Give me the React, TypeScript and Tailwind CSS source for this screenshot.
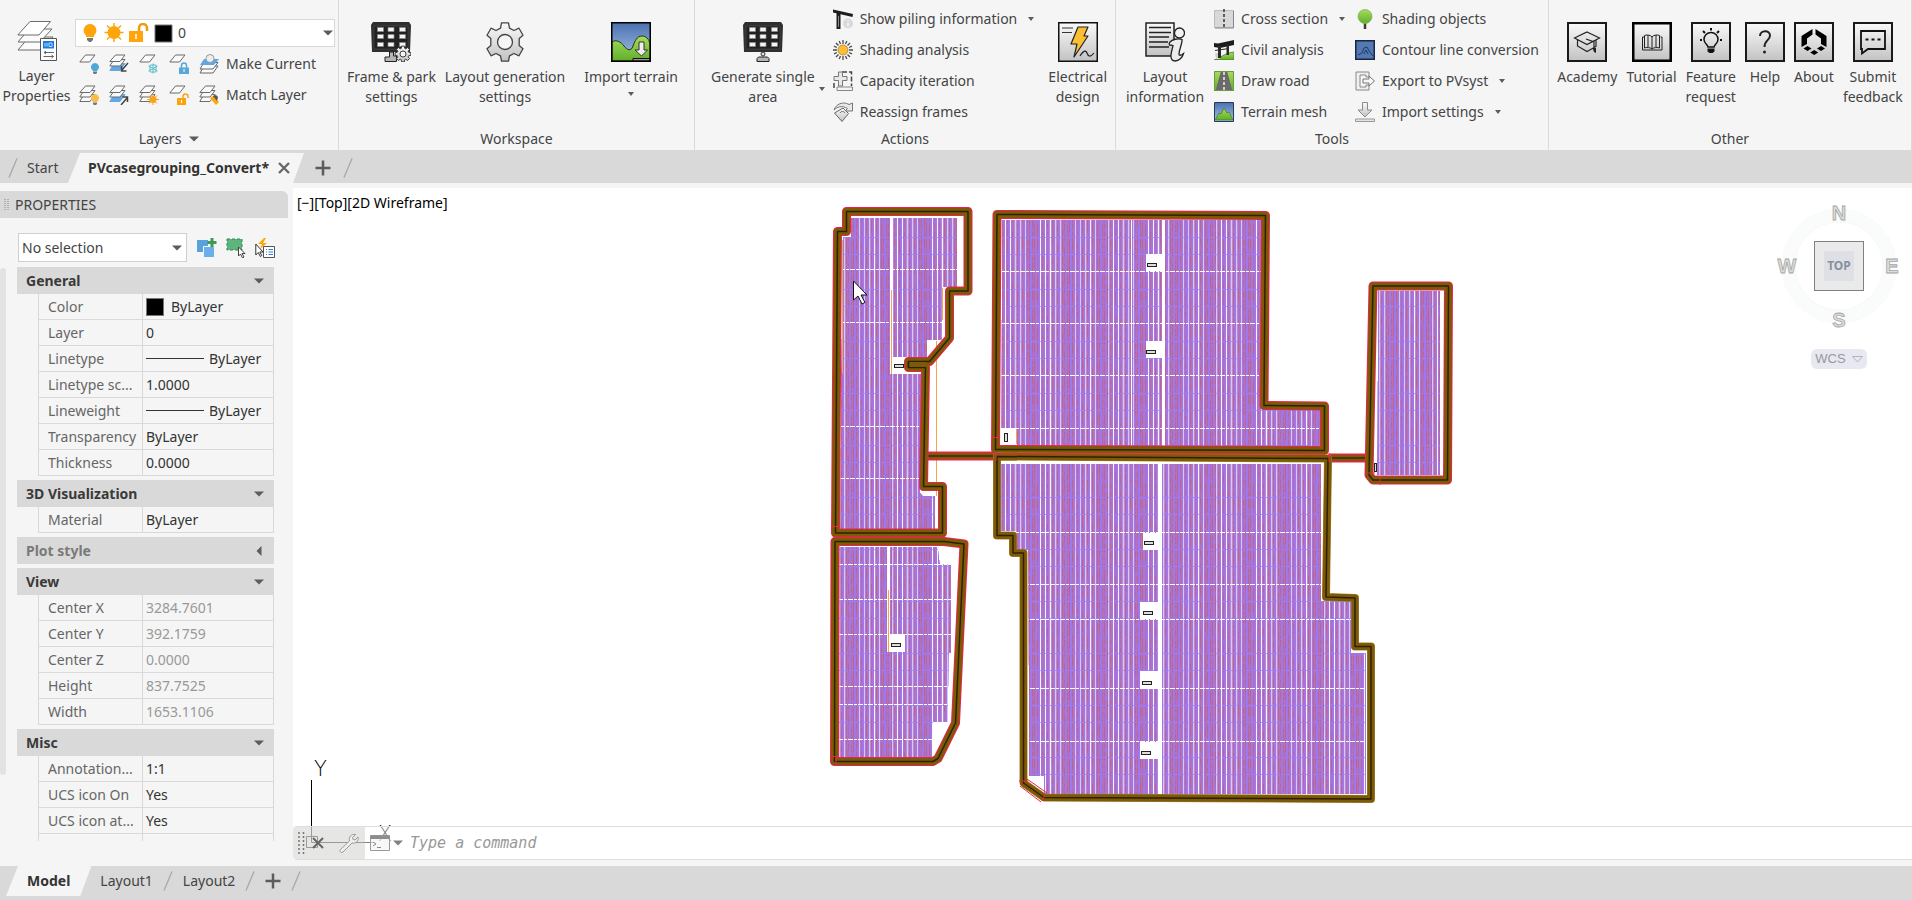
import type { ReactNode } from "react";
import clsx from "clsx";

type IconProps = { size?: number; children: ReactNode; className?: string };

function Svg({ size = 20, children, className }: IconProps) {
  return (
    <svg width={size} height={size} viewBox={`0 0 ${size} ${size}`} fill="none" aria-hidden="true" className={clsx("shrink-0", className)}>
      {children}
    </svg>
  );
}

function Caret({ className }: { className?: string }) {
  return (
    <svg width="10" height="6" viewBox="0 0 10 6" aria-hidden="true" className={clsx("shrink-0", className)}>
      <path d="M0 0.5h10L5 5.5z" fill="#5c5c5c" />
    </svg>
  );
}

function SmallCaret({ className }: { className?: string }) {
  return (
    <svg width="6" height="4" viewBox="0 0 6 4" aria-hidden="true" className={clsx("shrink-0", className)}>
      <path d="M0 0h6L3 4z" fill="#5c5c5c" />
    </svg>
  );
}

function SharedDefs() {
  return (
    <svg className="absolute h-0 w-0" aria-hidden="true">
      <defs>
        <linearGradient id="metal" x1="0" y1="0" x2="0" y2="1">
          <stop offset="0" stopColor="#fafafa" />
          <stop offset="1" stopColor="#c2c2c2" />
        </linearGradient>
        <linearGradient id="sky" x1="0" y1="0" x2="0" y2="1">
          <stop offset="0" stopColor="#4a72b0" />
          <stop offset="1" stopColor="#a9c3e8" />
        </linearGradient>
        <linearGradient id="grass" x1="0" y1="0" x2="0" y2="1">
          <stop offset="0" stopColor="#a8dc5c" />
          <stop offset="1" stopColor="#5fae2c" />
        </linearGradient>
      </defs>
    </svg>
  );
}

/* ---------- layer icons ---------- */

function Bulb({ x, y, color }: { x: number; y: number; color: string }) {
  return (
    <g transform={`translate(${x} ${y})`}>
      <path d="M4 0a4 4 0 0 0-2.4 7.2V8h4.8v-.8A4 4 0 0 0 4 0z" fill={color} />
      <path d="M2 8.6h4v1.4l-1 1H3l-1-1z" fill="#777" />
    </g>
  );
}

function Sheet() {
  return <path d="M6.5 1h9.5l-5.5 7H.8z" fill="#fafafa" stroke="#6b6b6b" />;
}

function Stack({ blue }: { blue?: boolean }) {
  return (
    <>
      <path d="M5 9.5h11l-5 7H.8z" fill={blue ? "#62a8e5" : "#fafafa"} stroke={blue ? "#62a8e5" : "#6b6b6b"} />
      <path d="M5 5.5h11l-5 6.5H.8z" fill="#fafafa" stroke="#6b6b6b" />
      <path d="M6.5 1h9.5l-5 6.5H.8z" fill="#fafafa" stroke="#6b6b6b" />
    </>
  );
}

const layerTools: { label: string; icon: ReactNode }[][] = [
  [
    { label: "Off", icon: <><Sheet /><Bulb x={12} y={9} color="#4fa9d8" /></> },
    { label: "Isolate", icon: <><Stack blue /><path d="M19 9l-6 7M12.5 12v5h5" stroke="#444" strokeWidth="1.5" /></> },
    {
      label: "Freeze",
      icon: <><Sheet /><path d="M14 9.5v10M9.5 12l9 5M9.5 17l9-5M11 11h6v7h-6z" stroke="#58bccb" /></>,
    },
    {
      label: "Lock",
      icon: <><Sheet /><path d="M12.5 14v-2.5a2.5 2.5 0 0 1 5 0V14" stroke="#56a8dc" strokeWidth="1.5" /><path d="M10 13.5h10V20H10z" fill="#56a8dc" /><path d="M15 15v3" stroke="#fff" /></>,
    },
  ],
  [
    { label: "Turn all on", icon: <><Stack /><Bulb x={12} y={9} color="#f9bd4a" /></> },
    { label: "Unisolate", icon: <><Stack blue /><path d="M12 20l6-7M13.5 12h5v5" stroke="#444" strokeWidth="1.5" /></> },
    {
      label: "Thaw",
      icon: <><Stack /><path d="M14 8.5v12M8 14.5h12M10 10.5l8 8M18 10.5l-8 8" stroke="#f8a41b" /><circle cx="14" cy="14.5" r="3.5" fill="#f8a41b" /></>,
    },
    {
      label: "Unlock",
      icon: <><Sheet /><path d="M14 14v-2.5a2.5 2.5 0 0 1 5 0V13" stroke="#f8a41b" strokeWidth="1.5" /><path d="M8 13h9v7H8z" fill="#fba30c" /><path d="M12.5 15v3" stroke="#fff" /></>,
    },
  ],
];

function LayerPropertiesIcon() {
  return (
    <Svg size={40}>
      <path d="M12 16h24L24 29H1z" fill="#fbfbfb" stroke="#6b6b6b" />
      <path d="M12 8h23L23 21H1z" fill="#fbfbfb" stroke="#6b6b6b" />
      <path d="M13 .5h20.5L22 14H.8z" fill="#fff" stroke="#6b6b6b" />
      <path d="M23.5 17.5h16v22h-16z" fill="#fff" stroke="#555" />
      <path d="M26 20h11v7.5H26z" fill="#1a7be5" />
      <path d="M28 22v3.5M30 22v3.5M32 22v3.5h3V22h-3" stroke="#bcd9f8" />
      <path d="M27 31.5h10M29 30l-2 1.5 2 1.5M26.5 35.5h10M34.5 34l2 1.5-2 1.5" stroke="#666" />
    </Svg>
  );
}

/* ---------- large ribbon icons ---------- */

function Panel() {
  return (
    <>
      <path d="M2 0h36l2 3-1 27H1L0 3z" fill="#2f2f2f" />
      <path d="M3 4h34v23H3z" fill="#222" stroke="#555" strokeWidth=".5" />
      {[5.5, 12.5, 20.5].map((row) =>
        [6.5, 17, 28.5].map((col) => (
          <path key={`${row}-${col}`} d={`M${col} ${row}h6v4h-6z`} fill="#f4f4f4" stroke="#888" strokeWidth=".7" />
        ))
      )}
    </>
  );
}

function Cog({ cx, cy, r }: { cx: number; cy: number; r: number }) {
  const pts: string[] = [];
  for (let i = 0; i < 8; i++) {
    [[-0.3, 0.74], [-0.17, 1], [0.17, 1], [0.3, 0.74]].forEach(([d, k]) => {
      const a = (i * Math.PI) / 4 + d;
      pts.push(`${(cx + Math.sin(a) * r * k).toFixed(1)},${(cy - Math.cos(a) * r * k).toFixed(1)}`);
    });
  }
  return (
    <>
      <polygon points={pts.join(" ")} fill="url(#metal)" stroke="#3b3b3b" strokeLinejoin="round" />
      <circle cx={cx} cy={cy} r={r * 0.38} fill="#f5f5f5" stroke="#3b3b3b" />
    </>
  );
}

const frameIcon = (
  <Svg size={40}>
    <Panel />
    <path d="M18.5 30h4v4h3v5.5H14V35h4.5z" fill="#b5b5b5" stroke="#222" />
    <Cog cx={32} cy={32} r={8} />
  </Svg>
);

const panelIcon = (
  <Svg size={40}>
    <Panel />
    <circle cx="20" cy="32" r="2" fill="#ddd" stroke="#333" />
    <path d="M14 36.5l1.5-1.5h9l1.5 1.5v3H14z" fill="#b5b5b5" stroke="#222" />
  </Svg>
);

const gearIcon = (
  <Svg size={40}>
    <path
      d="M16.5.8h7l1 5.4 4.5 2.3 5-2.3 4 7-3.8 3.3v7l3.8 3.3-4 7-5-2.3-4.5 2.3-1 5.4h-7l-1-5.4-4.5-2.3-5 2.3-4-7 3.8-3.3v-7L2 13.2l4-7 5 2.3 4.5-2.3z"
      fill="url(#metal)"
      stroke="#444"
      strokeWidth="1.3"
      strokeLinejoin="round"
    />
    <circle cx="20" cy="20" r="7.5" fill="#f5f5f5" stroke="#444" strokeWidth="1.3" />
  </Svg>
);

const terrainIcon = (
  <Svg size={40}>
    <path d="M.75.75h38.5v38.5H.75z" fill="url(#sky)" />
    <path d="M1 20c4-3 9 0 12 4 3 4 7 6 9 0 2-5 4-10 9-10 4 0 7 3 8 8v17H1z" fill="url(#grass)" stroke="#22310f" />
    <path d="M28 20h5v8h3.5L30.5 34 24 28h4z" fill="#eee" stroke="#333" />
    <path d="M22 36.5h17V39H22z" fill="#999" stroke="#111" />
    <path d="M.75.75h38.5v38.5H.75z" stroke="#000" strokeWidth="1.5" />
  </Svg>
);

const electricalIcon = (
  <Svg size={40}>
    <path d="M.75.75h38.5v38.5H.75z" fill="url(#metal)" stroke="#111" strokeWidth="1.5" />
    <path d="M4 6h11M4 10.5h10" stroke="#333" strokeWidth="1.2" />
    <path d="M20 5h10l-4 9h4L16 35l3-13h-6z" fill="#fbbf33" stroke="#222" strokeWidth="1.2" strokeLinejoin="round" />
    <path d="M22 34c4-6 6-6 7-3s3 5 7 0" stroke="#222" strokeWidth="1.2" />
  </Svg>
);

const infoIcon = (
  <Svg size={40}>
    <path d="M1 1h28v33H1z" fill="url(#metal)" stroke="#222" strokeWidth="1.5" />
    <path d="M4 5.5h22M4 10.5h22M4 15h20M4 20h19M4 25h20" stroke="#222" strokeWidth="1.3" />
    <circle cx="34.5" cy="11" r="5" fill="#f2f2f2" stroke="#222" strokeWidth="1.3" />
    <path
      d="M25 20c2-2.5 8-4 12-2.5.5 4-3 10-3 14.5 0 2 2 1.500 4.500-.5-1 4-4.500 7.500-8.500 7.500-7-.5-3-10-2-15.500-1.500-.5-2.500-.5-3.500-.5-.5-1-.5-2 .5-3z"
      fill="#ececec"
      stroke="#222"
      strokeWidth="1.3"
    />
  </Svg>
);

function Framed({ children }: { children: ReactNode }) {
  return (
    <Svg size={40}>
      <path d="M1 1h38v38H1z" fill="url(#metal)" stroke="#1a1a1a" strokeWidth="2" />
      {children}
    </Svg>
  );
}

const academyIcon = (
  <Framed>
    <path d="M20 10l12.5 6L20 22.5 7.5 16zM10.5 18v6L20 29.5l9-5v-6M19 17l8 3v7" stroke="#222" strokeWidth="1.2" />
    <path d="M25.5 26h3.5v5l-2-1z" fill="#222" />
  </Framed>
);
const tutorialIcon = (
  <Framed>
    <path d="M1 1h38v38H1z" stroke="#000" strokeWidth="3" />
    <path d="M20 15c-1-2-6-2.5-7.5-1.5V26c2-1 6-.5 7.5 1 1.5-1.5 5.5-2 7.5-1V13.5C26 12.5 21 13 20 15zM20 15v12M16 13v12M24 13v12M12 15h-1.5v13H30V15h-1.5" stroke="#222" />
  </Framed>
);
const featureIcon = (
  <Framed>
    <path d="M17 25c0-2-4-3.5-4-7.5a7 7 0 0 1 14 0c0 4-4 5.5-4 7.5z" stroke="#111" strokeWidth="1.5" />
    <path d="M16.5 26.5h7v3l-2 1.5h-3l-2-1.5z" fill="#111" />
    <path d="M20 6v2.5M12 9l2 2M28 9l-2 2M9 18h2M29 18h2" stroke="#111" strokeWidth="2" />
  </Framed>
);
const helpIcon = (
  <Framed>
    <path d="M15 14c0-6 10-6.5 10-.5 0 5-5.5 4.5-5.5 11.5" stroke="#222" strokeWidth="2" />
    <circle cx="19.5" cy="30" r="1.5" fill="#222" />
  </Framed>
);
const aboutIcon = (
  <Framed>
    <path d="M18.5 7v5.5L13 16.5V22l-5.500 3V14zM21.5 7v5.5l5.500 4V22l5.500 3V14z" fill="#000" />
    <path d="M13.5 24l4 2.5-4 2.5-4-2.5zM27 24l4 2.5-4 2.5-4-2.5zM20.2 28l4 2.5-4 2.5-4-2.5z" fill="#000" />
  </Framed>
);
const feedbackIcon = (
  <Framed>
    <path d="M8 9h24v18H15l-6 4.5V27H8z" stroke="#111" strokeWidth="1.8" />
    <path d="M12.5 16.5h3v2h-3zM18.5 16.5h3v2h-3zM24.5 16.5h3v2h-3z" fill="#111" />
  </Framed>
);

/* ---------- small ribbon icons ---------- */

const pilingIcon = (
  <Svg>
    <path d="M0 .5l20 4.5-.5 3L0 3.5z" fill="#1d1d1d" />
    <path d="M3.5 4h4v16h-4z" fill="#1d1d1d" />
    <path d="M5.5 7v11" stroke="#888" />
    <circle cx="15" cy="14.5" r="5" fill="#d9d9d9" />
    <path d="M15 11v1M15 13.5v4" stroke="#f6f6f6" strokeWidth="1.5" />
  </Svg>
);
const shadingIcon = (
  <Svg>
    <path
      d="M10 0v4M10 16v4M0 10h4M16 10h4M3 3l2.5 2.5M14.5 14.5L17 17M17 3l-2.5 2.5M5.5 14.5L3 17M6.2.9l1.3 3M12.5 16l1.3 3M13.8.9l-1.3 3M7.5 16l-1.3 3M.9 6.2l3 1.3M16 12.5l3 1.3M19 6.2l-3 1.3M4 12.5l-3 1.3"
      stroke="#4a4a4a"
      strokeWidth="1.3"
    />
    <circle cx="10" cy="10" r="5" fill="#fbbd3a" stroke="#a67a1d" strokeWidth=".7" />
  </Svg>
);
const capacityIcon = (
  <Svg>
    <path d="M9 1h9.5v14M1 12v7" stroke="#444" strokeWidth="1.5" strokeDasharray="5 2" />
    <path d="M5.5 1h4v4.5H14v4H9.5V15h-4V9.5H1v-4h4.5z" fill="#e8e8e8" stroke="#777" />
    <path d="M4 16h15.5v3.5H4z" fill="#f4f4f4" stroke="#888" />
  </Svg>
);
const reassignIcon = (
  <Svg>
    <path d="M1 8C3 2 10-1 16 2.5L19.5 1v8H12l2.5-2.5C9 3 4 5 1 8z" fill="#e8e8e8" stroke="#777" />
    <path d="M10 6l5.5 5.5L9 19.5 1.5 11z" fill="url(#metal)" stroke="#666" />
    <path d="M7 11c1-2 4-2 5 0" stroke="#666" />
  </Svg>
);
const crossIcon = (
  <Svg>
    <path d="M.5 1.5h19v17H.5z" fill="#d8d8d8" stroke="#bbb" />
    <path d="M1 19h18.5V2" stroke="#888" />
    <path d="M10 0v20" stroke="#333" strokeWidth="1.5" strokeDasharray="3 2" />
  </Svg>
);
const civilIcon = (
  <Svg>
    <path d="M0 20c6-1 9-7 20-8v8z" fill="url(#grass)" stroke="#41701f" strokeWidth=".7" />
    <path d="M1 13h5v6H2z" fill="#cfcfcf" />
    <path d="M0 3l4 .5L20 0v5L6 8 0 7z" fill="#1d1d1d" />
    <path d="M4 6h3v12H4zM12.5 5H15v10h-2.5z" fill="#2a2a2a" />
    <path d="M1 10.5l14-2" stroke="#2a2a2a" />
  </Svg>
);
const roadIcon = (
  <Svg>
    <path d="M0 0h20v20H0z" fill="url(#grass)" />
    <path d="M7 0h6l5.5 20h-17z" fill="#6a6a6a" />
    <path d="M10 1v18" stroke="#f2f2f2" strokeWidth="1.5" strokeDasharray="3 2" />
    <path d="M.5.5h19v19H.5z" stroke="#6b9a3f" />
  </Svg>
);
const meshIcon = (
  <Svg>
    <path d="M.5.5h19v19H.5z" fill="url(#sky)" stroke="#263a5c" />
    <path d="M1 18l4-7 2 1 3-6 3 5 2-1 4 8z" fill="url(#grass)" stroke="#447622" strokeWidth=".7" />
  </Svg>
);
const treeIcon = (
  <Svg>
    <path d="M10 12v8" stroke="#4a3a2a" strokeWidth="2.5" />
    <circle cx="10" cy="7.5" r="7" fill="url(#grass)" stroke="#86b35c" strokeWidth=".8" />
  </Svg>
);
const contourIcon = (
  <Svg>
    <path d="M.75.75h18.5v18.5H.75z" fill="#5379b4" stroke="#1b2740" strokeWidth="1.5" />
    <path d="M3 15l4-2 2-5 3-1 2 4 4 5M9 14l2-4 2 4" stroke="#213a66" />
  </Svg>
);
const exportIcon = (
  <Svg>
    <path d="M1 1h13v5h-3V4H5v12h6v-2h3v5H1z" fill="#f0f0f0" stroke="#888" />
    <path d="M8 8h6V5l5.5 5-5.5 5v-3H8z" fill="#f6f6f6" stroke="#777" />
  </Svg>
);
const importIcon = (
  <Svg>
    <path d="M7.5.5h5V8H17l-7 7-7-7h4.5z" fill="url(#metal)" stroke="#8a8a8a" />
    <path d="M.5 17h19v2.5H.5z" fill="#e4e4e4" stroke="#999" />
  </Svg>
);

/* ---------- ribbon ---------- */

function BigButton({ icon, lines, caret, className }: { icon: ReactNode; lines: string[]; caret?: boolean; className?: string }) {
  return (
    <button className={clsx("flex flex-col items-center text-center text-sm leading-5 text-[#444]", className)}>
      <span className="mb-[5px]">{icon}</span>
      {lines.map((l) => (
        <span key={l} className="whitespace-nowrap">
          {l}
        </span>
      ))}
      {caret && <SmallCaret className="mt-[5px]" />}
    </button>
  );
}

function SmallButton({ icon, label, caret }: { icon: ReactNode; label: string; caret?: boolean }) {
  return (
    <button className="flex h-[31px] items-center gap-[7px] whitespace-nowrap text-sm text-[#444]">
      {icon}
      {label}
      {caret && <SmallCaret className="ml-1" />}
    </button>
  );
}

function Group({ title, caret, children, className }: { title: string; caret?: boolean; children: ReactNode; className?: string }) {
  return (
    <section className="flex min-w-0 flex-col border-r border-[#d9d9d9]" aria-label={title}>
      <div className={clsx("flex h-32 items-start", className)}>{children}</div>
      <div className="flex h-[22px] items-center justify-center gap-2 text-sm text-[#444]">
        {title}
        {caret && <Caret />}
      </div>
    </section>
  );
}

function Ribbon() {
  return (
    <header className="grid grid-cols-[339fr_356fr_421fr_433fr_363fr] bg-[#f5f5f5]">
      <Group title="Layers" caret className="pt-[19px]">
        <BigButton icon={<LayerPropertiesIcon />} lines={["Layer", "Properties"]} className="w-[73px] shrink-0 pt-[2px]" />
        <div className="min-w-0 flex-1 pl-[2px] pr-[3px]">
          <div className="relative mb-px flex h-7 items-center border border-[#d9d9d9] bg-white pl-[7px]">
            <svg width="92" height="20" viewBox="0 0 92 20" aria-hidden="true" fill="none">
              <path d="M7 1a6.5 6.5 0 0 0-4 11.5V14h8v-1.5A6.5 6.5 0 0 0 7 1z" fill="#fda50a" />
              <path d="M4 15h6v2l-2 2H6l-2-2z" fill="#777" />
              <path d="M31 0v19M21.5 9.5h19M24 2.5l14 14M38 2.5l-14 14" stroke="#fda50a" strokeWidth="1.5" />
              <circle cx="31" cy="9.5" r="6.5" fill="#fda50a" />
              <path d="M56 8V5a4 4 0 0 1 8 0v3" stroke="#f29a0c" strokeWidth="2.5" />
              <path d="M46 8h14v11H46z" fill="#fda50a" />
              <path d="M53 11v5" stroke="#fff" strokeWidth="1.5" />
              <path d="M72 2h17v17H72z" fill="#000" stroke="#777" />
            </svg>
            <select aria-label="Current layer" className="h-full flex-1 appearance-none bg-transparent pl-[3px] text-sm text-[#444]" defaultValue="0">
              <option value="0">0</option>
            </select>
            <Caret className="pointer-events-none absolute right-px" />
          </div>
          {layerTools.map((row, i) => (
            <div key={i} className="flex h-[31px] items-center gap-[10px] pl-1">
              {row.map((t) => (
                <button key={t.label} aria-label={t.label} title={t.label}>
                  <Svg>{t.icon}</Svg>
                </button>
              ))}
              <SmallButton
                icon={
                  <Svg>
                    {i === 0 ? (
                      <>
                        <path d="M5 12h14l-5 7H1z" fill="#fafafa" stroke="#666" />
                        <path d="M5 8.5h14L14 15H1z" fill="#fafafa" stroke="#666" />
                        <path d="M5 5h15l-5 6H1z" fill="#5ba7e8" />
                        <circle cx="11" cy="4.5" r="4" fill="#eee" stroke="#999" />
                      </>
                    ) : (
                      <>
                        <Stack />
                        <path d="M11 13l3-2 6 6-3 3z" fill="#fda50a" />
                        <path d="M14 11l3-1 2 2-1 4z" fill="#555" />
                      </>
                    )}
                  </Svg>
                }
                label={i === 0 ? "Make Current" : "Match Layer"}
              />
            </div>
          ))}
        </div>
      </Group>

      <Group title="Workspace" className="gap-[9px] pl-2 pt-[22px]">
        <BigButton icon={frameIcon} lines={["Frame & park", "settings"]} />
        <BigButton icon={gearIcon} lines={["Layout generation", "settings"]} />
        <BigButton icon={terrainIcon} lines={["Import terrain"]} caret className="ml-[10px]" />
      </Group>

      <Group title="Actions" className="pl-4">
        <BigButton icon={panelIcon} lines={["Generate single", "area"]} className="pt-[22px]" />
        <SmallCaret className="ml-1 mt-[87px]" />
        <div className="ml-2 flex flex-col pt-[3px]">
          <SmallButton icon={pilingIcon} label="Show piling information" caret />
          <SmallButton icon={shadingIcon} label="Shading analysis" />
          <SmallButton icon={capacityIcon} label="Capacity iteration" />
          <SmallButton icon={reassignIcon} label="Reassign frames" />
        </div>
        <BigButton icon={electricalIcon} lines={["Electrical", "design"]} className="ml-auto mr-2 pt-[22px]" />
      </Group>

      <Group title="Tools" className="pl-[10px]">
        <BigButton icon={infoIcon} lines={["Layout", "information"]} className="pt-[22px]" />
        <div className="ml-[10px] flex flex-col pt-[3px]">
          <SmallButton icon={crossIcon} label="Cross section" caret />
          <SmallButton icon={civilIcon} label="Civil analysis" />
          <SmallButton icon={roadIcon} label="Draw road" />
          <SmallButton icon={meshIcon} label="Terrain mesh" />
        </div>
        <div className="ml-auto mr-[9px] flex flex-col pt-[3px]">
          <SmallButton icon={treeIcon} label="Shading objects" />
          <SmallButton icon={contourIcon} label="Contour line conversion" />
          <SmallButton icon={exportIcon} label="Export to PVsyst" caret />
          <SmallButton icon={importIcon} label="Import settings" caret />
        </div>
      </Group>

      <Group title="Other" className="justify-center gap-[9px] pt-[22px]">
        <BigButton icon={academyIcon} lines={["Academy"]} />
        <BigButton icon={tutorialIcon} lines={["Tutorial"]} />
        <BigButton icon={featureIcon} lines={["Feature", "request"]} />
        <BigButton icon={helpIcon} lines={["Help"]} />
        <BigButton icon={aboutIcon} lines={["About"]} />
        <BigButton icon={feedbackIcon} lines={["Submit", "feedback"]} />
      </Group>
    </header>
  );
}

/* ---------- tabs ---------- */

function Slash() {
  return (
    <svg width="10" height="20" viewBox="0 0 10 20" aria-hidden="true" className="shrink-0">
      <path d="M1 19.5L9 .5" stroke="#a8a8a8" strokeWidth="1.3" />
    </svg>
  );
}

function Plus() {
  return (
    <Svg size={16}>
      <path d="M8 .5v15M.5 8h15" stroke="#5c5c5c" strokeWidth="2.5" />
    </Svg>
  );
}

function DocumentTabs() {
  return (
    <nav className="flex h-[33px] items-center bg-[#d9d9d9] pl-2 pt-[3px] text-sm text-[#444]" aria-label="Drawings">
      <Slash />
      <button className="w-[50px] pl-[9px] text-left">Start</button>
      <div className="flex h-full items-center bg-[#f5f5f5] pl-5 pr-[14px] [clip-path:polygon(12px_0,100%_0,calc(100%-11px)_100%,0_100%)]">
        <button className="font-bold text-[#333]">PVcasegrouping_Convert*</button>
        <button aria-label="Close drawing" className="ml-[9px]">
          <Svg size={12}>
            <path d="M1 1l10 10M11 1L1 11" stroke="#666" strokeWidth="2.3" />
          </Svg>
        </button>
      </div>
      <button aria-label="New drawing" className="ml-[11px] mr-3">
        <Plus />
      </button>
      <Slash />
    </nav>
  );
}

function LayoutTabs() {
  return (
    <nav className="flex h-[34px] shrink-0 items-center bg-[#d9d9d9] pb-1 pl-[6px] text-sm text-[#444]" aria-label="Layouts">
      <button className="h-full bg-[#f5f5f5] px-[21px] font-bold text-[#333] [clip-path:polygon(12px_0,100%_0,calc(100%-11px)_100%,0_100%)]">
        Model
      </button>
      <div className="flex items-center gap-[10px] pl-[9px]">
        <button>Layout1</button>
        <Slash />
        <button>Layout2</button>
        <Slash />
        <button aria-label="New layout">
          <Plus />
        </button>
        <Slash />
      </div>
    </nav>
  );
}

/* ---------- properties palette ---------- */

interface Section {
  title: string;
  rows: [string, string, ("swatch" | "line")?][];
  closed?: boolean;
  readOnly?: boolean;
}

const sections: Section[] = [
  {
    title: "General",
    rows: [
      ["Color", "ByLayer", "swatch"],
      ["Layer", "0"],
      ["Linetype", "ByLayer", "line"],
      ["Linetype sc...", "1.0000"],
      ["Lineweight", "ByLayer", "line"],
      ["Transparency", "ByLayer"],
      ["Thickness", "0.0000"],
    ],
  },
  { title: "3D Visualization", rows: [["Material", "ByLayer"]] },
  { title: "Plot style", rows: [], closed: true },
  {
    title: "View",
    readOnly: true,
    rows: [
      ["Center X", "3284.7601"],
      ["Center Y", "392.1759"],
      ["Center Z", "0.0000"],
      ["Height", "837.7525"],
      ["Width", "1653.1106"],
    ],
  },
  {
    title: "Misc",
    rows: [
      ["Annotation...", "1:1"],
      ["UCS icon On", "Yes"],
      ["UCS icon at...", "Yes"],
      ["", ""],
    ],
  },
];

function PropertySection({ title, rows, closed, readOnly }: Section) {
  return (
    <section className="mb-1">
      <button
        className={clsx("flex h-[27px] w-full items-center justify-between bg-[#d9d9d9] pl-[9px] pr-[10px] text-sm font-bold", closed ? "text-[#7a7a7a]" : "text-[#3a3a3a]")}
        aria-expanded={!closed}
      >
        {title}
        <Caret className={closed ? "rotate-90" : ""} />
      </button>
      {rows.length > 0 && (
        <div className="pl-[21px]">
          <table className="w-full table-fixed border-separate border-spacing-0 border-l border-[#d9d9d9] text-sm">
            <tbody>
              {rows.map(([name, value, kind]) => (
                <tr key={name} className="h-[26px]">
                  <th scope="row" className="w-[104px] whitespace-nowrap border-b border-r border-[#d9d9d9] py-0 pl-[9px] text-left font-normal leading-5 text-[#666]">
                    {name}
                  </th>
                  <td className={clsx("border-b border-r border-[#d9d9d9] py-0 pl-[3px] leading-5", readOnly ? "text-[#999]" : "text-[#333]")}>
                    <span className="flex items-center">
                      {kind === "swatch" && <span className="mr-[7px] h-[18px] w-[18px] border border-[#777] bg-black" />}
                      {kind === "line" && <span className="mr-[5px] h-px w-[58px] bg-[#333]" />}
                      {value}
                    </span>
                  </td>
                </tr>
              ))}
            </tbody>
          </table>
        </div>
      )}
    </section>
  );
}

function PropertiesPalette() {
  return (
    <aside className="flex w-[293px] shrink-0 flex-col bg-[#f5f5f5] pt-2">
      <h2 className="mr-[5px] flex h-[27px] items-center rounded-tr-md bg-[#d9d9d9] pl-1 text-sm text-[#444]">
        <svg width="5" height="12" viewBox="0 0 5 12" aria-hidden="true" className="mr-[6px]">
          <path d="M1 0v12M4 0v12" stroke="#888" strokeDasharray="1 1" />
        </svg>
        PROPERTIES
      </h2>
      <div className="mt-[15px] flex items-center pl-[18px]">
        <div className="relative flex h-[29px] w-[169px] items-center border border-[#d0d0d0] bg-white">
          <select aria-label="Selection" className="h-full w-full appearance-none bg-transparent pl-[3px] text-sm text-[#444]" defaultValue="none">
            <option value="none">No selection</option>
          </select>
          <Caret className="pointer-events-none absolute right-1" />
        </div>
        <div className="ml-[10px] flex gap-[9px]">
          <button aria-label="Toggle PICKADD">
            <Svg>
              <path d="M0 2h11v12H0z" fill="#5aa2dc" />
              <path d="M6.5 8.5h11v11h-11z" fill="#69b0ea" stroke="#f5f5f5" />
              <path d="M15 0v9M10.5 4.5h9" stroke="#3f9a58" strokeWidth="3" />
            </Svg>
          </button>
          <button aria-label="Select objects">
            <Svg>
              <path d="M1 1h15v11H1z" fill="#5fb37c" stroke="#2f8a50" strokeDasharray="3 2" />
              <path d="M12.5 9v9l2-2 2 4 1.5-1-2-3.5h3z" fill="#fff" stroke="#444" />
            </Svg>
          </button>
          <button aria-label="Quick select">
            <Svg>
              <path d="M9 0L3 6h4l-2 5 7-6H8l3-5z" fill="#fda50a" />
              <path d="M.8 6v11l2.5-2.5 2 4 1.5-1-2-3.5H8z" fill="#fff" stroke="#333" />
              <path d="M8.5 8.5h11v11h-11z" fill="#fff" stroke="#555" />
              <path d="M11 11.5h1M13.5 11.5H18M11 14h1M13.5 14H18M11 16.5h1M13.5 16.5H18" stroke="#2f7fd4" />
            </Svg>
          </button>
        </div>
      </div>
      <div className="mt-[5px] flex">
        <div className="mr-[11px] mt-px h-[507px] w-[6px] rounded-full bg-[#e3e3e3]" />
        <div className="h-[574px] w-[257px] overflow-hidden">
          {sections.map((s) => (
            <PropertySection key={s.title} {...s} />
          ))}
        </div>
      </div>
    </aside>
  );
}

/* ---------- drawing ---------- */

interface Area {
  id: string;
  outline: string;
  fill: string;
  red: boolean;
  rows: number[];
  x: [number, number];
}

const areas: Area[] = [
  {
    id: "a",
    red: true,
    outline: "846.5,211.5 968,211.5 968,291 949.5,291 949.5,338 929.5,361.5 908.5,361.5 908.5,367.5 925.5,367.5 923.5,486.5 942.5,486.5 942.5,533 835.5,533 837.5,231.5 846.5,231.5",
    fill: "851,218 957,218 957,287 942,287 942,340 927,340 927,357 893,357 893,374 922,374 920,492 923,496 935,496 935,529 840,529 841,374 843,237 851,237",
    rows: [269.5, 322.5, 426.5, 478.5],
    x: [840, 960],
  },
  {
    id: "b",
    red: true,
    outline: "997,214.5 1265.5,215.5 1264,405.5 1324.5,406 1324.5,450.5 995.5,449.5",
    fill: "1002,220 1261,220 1261,409 1320,410 1320,446 1017,446 1017,428 1001,428",
    rows: [271.5, 323.5, 375.5, 428.5],
    x: [1000, 1320],
  },
  {
    id: "c",
    red: true,
    outline: "1373,286 1448.5,286 1447.5,480 1373,480 1369,475",
    fill: "1378,291 1440,291 1440,475 1377,475",
    rows: [],
    x: [1370, 1440],
  },
  {
    id: "e",
    red: true,
    outline: "835,541.5 944,541.5 964,544 955.5,723 938,758.5 933,761.5 834.5,761.5",
    fill: "839,547 938,547 940,564 951,564 951,653 949,653 948,722 933,722 932,757 838,757",
    rows: [564.5, 599.5, 634.5, 686.5, 704.5, 739.5],
    x: [838, 952],
  },
  {
    id: "d",
    red: false,
    outline: "997,456.5 1328,458.5 1326,597 1355,598 1355,646.5 1371,646.5 1371,799 1044,797.5 1023.5,783 1023.5,553 1013,553 1013,535.5 997,535.5",
    fill: "1001,464 1321,464 1321,601 1351,601 1351,653 1366,653 1366,794 1044,794 1044,776 1029,776 1028,550 1016,550 1016,531 1001,531",
    rows: [532.5, 584.5, 619.5, 688.5, 741.5],
    x: [1000, 1366],
  },
];

// white lanes and cut-outs inside the arrays: x, y, w, h
const gaps: [number, number, number, number][] = [
  [890, 218, 3, 156], [1162, 220, 3, 226], [1131, 220, 1, 226], [1158, 464, 4, 330], [887, 547, 3, 105],
  [1146, 254, 16, 17], [1146, 341, 16, 17], [1143, 533, 15, 17], [1140, 602, 18, 17], [1140, 671, 18, 18], [1140, 742, 18, 17],
  [890, 634, 15, 18],
];

const stations: [number, number, number, number][] = [
  [894, 364, 10, 4], [1147, 263, 10, 4], [1146, 350, 10, 4], [1004, 433, 4, 9], [1374, 463, 3, 9],
  [1144, 541, 10, 4], [1143, 611, 10, 4], [1142, 681, 10, 4], [1141, 751, 10, 4], [891, 643, 10, 4],
];

// Tile of 1px string columns; seeded so the tile is the same on every render.
const TILE_W = 108;
const TILE_H = 52;

function buildTile() {
  let seed = 7;
  const rnd = () => {
    seed = (seed * 16807) % 2147483647;
    return seed / 2147483647;
  };
  const cells: { x: number; y: number; h: number; c: string }[] = [];
  for (let x = 0; x < TILE_W; x++) {
    const dense = x % 36 > 26;
    const slot = x % 5;
    if (slot === 0 && !dense) {
      cells.push({ x, y: 0, h: TILE_H, c: rnd() > 0.5 ? "#f6f2ff" : "#d9c8f5" });
      continue;
    }
    if (slot === 2 || (slot === 4 && dense)) {
      const red = rnd() > 0.45;
      cells.push({ x, y: 0, h: TILE_H, c: red ? "#bf6584" : "#b06fba" });
      for (let y = 0; y < TILE_H; y += 4) {
        if (rnd() > 0.6) cells.push({ x, y, h: 2 + Math.floor(rnd() * 4), c: red ? "#b06fba" : "#c4627f" });
      }
      continue;
    }
    cells.push({ x, y: 0, h: TILE_H, c: slot === 3 ? "#ad73ca" : rnd() > 0.75 ? "#b38be0" : "#a078ee" });
  }
  return cells;
}

const tile = buildTile();

function SitePlan() {
  return (
    <svg viewBox="293 188 1619 672" preserveAspectRatio="xMinYMin meet" className="block w-full" role="img" aria-label="Site plan" fill="none">
      <defs>
        <pattern id="strings" width={TILE_W} height={TILE_H} patternUnits="userSpaceOnUse" x="1000" y="220">
          {tile.map((c, i) => (
            <rect key={i} x={c.x} y={c.y} width="1" height={c.h} fill={c.c} />
          ))}
          <path d={`M0 17.5h${TILE_W}M0 34.5h${TILE_W}`} stroke="#9a80ff" strokeOpacity=".7" strokeDasharray="5 1" />
        </pattern>
        {areas.map((a) => (
          <clipPath key={a.id} id={`clip-${a.id}`}>
            <polygon points={a.fill} />
          </clipPath>
        ))}
      </defs>

      {areas.map((a) => (
        <g key={a.id} clipPath={`url(#clip-${a.id})`} shapeRendering="crispEdges">
          <polygon points={a.fill} fill="url(#strings)" />
          {a.rows.map((y) => (
            <path key={y} d={`M${a.x[0]} ${y}H${a.x[1]}`} stroke="#fff" strokeDasharray="5 1 3 1" />
          ))}
        </g>
      ))}
      {gaps.map(([x, y, w, h]) => (
        <rect key={`${x}-${y}`} x={x} y={y} width={w} height={h} fill="#fff" />
      ))}
      <path d="M936.5 341V496M891.5 290V374M888.5 590V652M942.5 288V320M1016.5 429V444M842.5 240V374" stroke="#f6a54a" />

      <g strokeLinejoin="round">
        {/* access roads */}
        <path d="M928 456H997M1329 458H1368" stroke="#f0204c" strokeWidth="9" />
        <path d="M928 456H997M1329 458H1368" stroke="#7d5a07" strokeWidth="6" />
        <path d="M928 456H997M1329 458H1368" stroke="#1c1400" />
        {areas.map((a) => (
          <g key={a.id}>
            <polygon points={a.outline} stroke={a.red ? "#f0204c" : "#a8843c"} strokeWidth={a.red ? 9 : 8} />
            <polygon points={a.outline} stroke="#7d5a07" strokeWidth="7" />
            <polygon points={a.outline} stroke="#2e2100" strokeWidth="1.5" />
          </g>
        ))}
        <path d="M908 364.5H926" stroke="#7d5a07" strokeWidth="5" />
        <path d="M908.5 361.5v6" stroke="#2e2100" strokeWidth="1.5" />
        <path
          d="M995 454H1325M991 437.5h9M831 526.5h9M1020 786l21 16M1027 779l20 14M1019 781h9M1042 801l4-8M831 756.5h8M836 757v9M1380 476v9M1366 473h9M996 452v9M1329 453v9"
          stroke="#f0204c"
        />
      </g>

      {stations.map(([x, y, w, h]) => (
        <rect key={`${x}-${y}`} x={x + 0.5} y={y + 0.5} width={w - 1} height={h - 1} fill="#ddd" stroke="#222" />
      ))}

      {/* pointer */}
      <path d="M853.5 281v19l4.5-4 4 8 3-1.5-4-7.5h6z" fill="#fff" stroke="#111" />

      {/* UCS icon */}
      <g stroke="#000">
        <path d="M311.5 780V842.5H374" />
        <path d="M306.5 836.5h11v11h-11z" />
      </g>
      <g fill="#000" fontFamily='"DejaVu Sans Light", "DejaVu Sans", sans-serif' fontWeight="200" fontSize="21" textAnchor="middle">
        <text x="320.5" y="776">Y</text>
        <text x="385" y="841">X</text>
      </g>
    </svg>
  );
}

function ViewCube() {
  return (
    <div className="absolute right-[11px] top-[14px] flex flex-col items-center">
      <svg width="124" height="128" viewBox="0 0 124 128" role="img" aria-label="View cube">
        <circle cx="62" cy="64" r="50" fill="none" stroke="#fafcfb" strokeWidth="13" />
        <circle cx="62" cy="64" r="57" fill="none" stroke="#f4f6f5" strokeDasharray="2 2" />
        <circle cx="62" cy="64" r="44" fill="none" stroke="#f4f6f5" strokeDasharray="2 2" />
        <rect x="37.5" y="39.5" width="49" height="49" fill="#eaeaea" stroke="#808080" />
        <rect x="47" y="49" width="30" height="30" fill="#dfe0e5" />
        <g fontFamily='"Liberation Sans", sans-serif' fontWeight="700" textAnchor="middle">
          <text x="62" y="68" fontSize="12" fontFamily='"Noto Sans", sans-serif' fill="#86909c">TOP</text>
          <g fontSize="20" fill="#dcdcdc" stroke="#a5a5a5" strokeWidth=".8">
            <text x="62" y="18">N</text>
            <text x="62" y="125">S</text>
            <text x="10" y="71">W</text>
            <text x="115" y="71">E</text>
          </g>
        </g>
      </svg>
      <button className="mt-[19px] flex h-5 items-center gap-[6px] rounded-md bg-[#e7e8f2] px-1 font-['Liberation_Sans',sans-serif] text-[13px] text-[#999]">
        WCS
        <svg width="11" height="7" viewBox="0 0 11 7" fill="none" aria-hidden="true">
          <path d="M.5.5h10L5.500 6z" stroke="#b5b5b5" />
        </svg>
      </button>
    </div>
  );
}

function CommandLine() {
  return (
    <form className="absolute inset-x-0 bottom-0 flex h-[34px] items-stretch overflow-hidden rounded-l border-y border-[#dedede]" onSubmit={(e) => e.preventDefault()}>
      <div className="flex w-[72px] shrink-0 items-center bg-[#dcdcda]/70 pl-[5px]">
        <svg width="7" height="22" viewBox="0 0 7 22" aria-hidden="true">
          <path d="M1 0v22M5.5 0v22" stroke="#777" strokeWidth="1.5" strokeDasharray="2 2" />
        </svg>
        <button type="button" aria-label="Close command line" className="ml-[7px]">
          <Svg size={12}>
            <path d="M1 1l10 10M11 1L1 11" stroke="#666" strokeWidth="2" />
          </Svg>
        </button>
        <button type="button" aria-label="Customize" className="ml-[15px]">
          <Svg>
            <path d="M1.5 16.5l9-8.5c-1-4 2-7.5 6-6.5l-3 3 .5 2 2 .5 3-3c1 4-2.5 7-6 6l-9 9c-2 1.5-4-1-2.5-2.5z" fill="#f0f0f0" stroke="#999" />
          </Svg>
        </button>
      </div>
      <div className="flex flex-1 items-center bg-white/50 pl-[5px]">
        <button type="button" aria-label="Recent commands" className="flex items-center gap-[3px]">
          <Svg>
            <path d="M.5 2.5h19v15H.5z" fill="#f2f2f2" fillOpacity=".6" stroke="#999" />
            <path d="M.5 2.5h19V6H.5z" fill="#8d8d8d" />
            <path d="M3 9l3 2-3 2M7 14.5h4" stroke="#888" />
          </Svg>
          <svg width="10" height="6" viewBox="0 0 10 6" aria-hidden="true">
            <path d="M0 .5h10L5 5.5z" fill="#808080" />
          </svg>
        </button>
        <input
          aria-label="Command"
          placeholder="Type a command"
          className="ml-[7px] h-full flex-1 bg-transparent font-['DejaVu_Sans_Mono',monospace] text-[15px] italic outline-none placeholder:text-[#999]"
        />
      </div>
    </form>
  );
}

export default function App() {
  return (
    <div className="flex min-h-screen flex-col bg-[#f5f5f5] font-['Noto_Sans',sans-serif]">
      <SharedDefs />
      <Ribbon />
      <DocumentTabs />
      <div className="flex flex-1 pb-[6px]">
        <PropertiesPalette />
        <main className="relative mt-[5px] min-w-0 flex-1 bg-white">
          <SitePlan />
          <p className="absolute left-1 top-[5px] text-sm text-black">[−][Top][2D Wireframe]</p>
          <ViewCube />
          <CommandLine />
        </main>
      </div>
      <LayoutTabs />
    </div>
  );
}
